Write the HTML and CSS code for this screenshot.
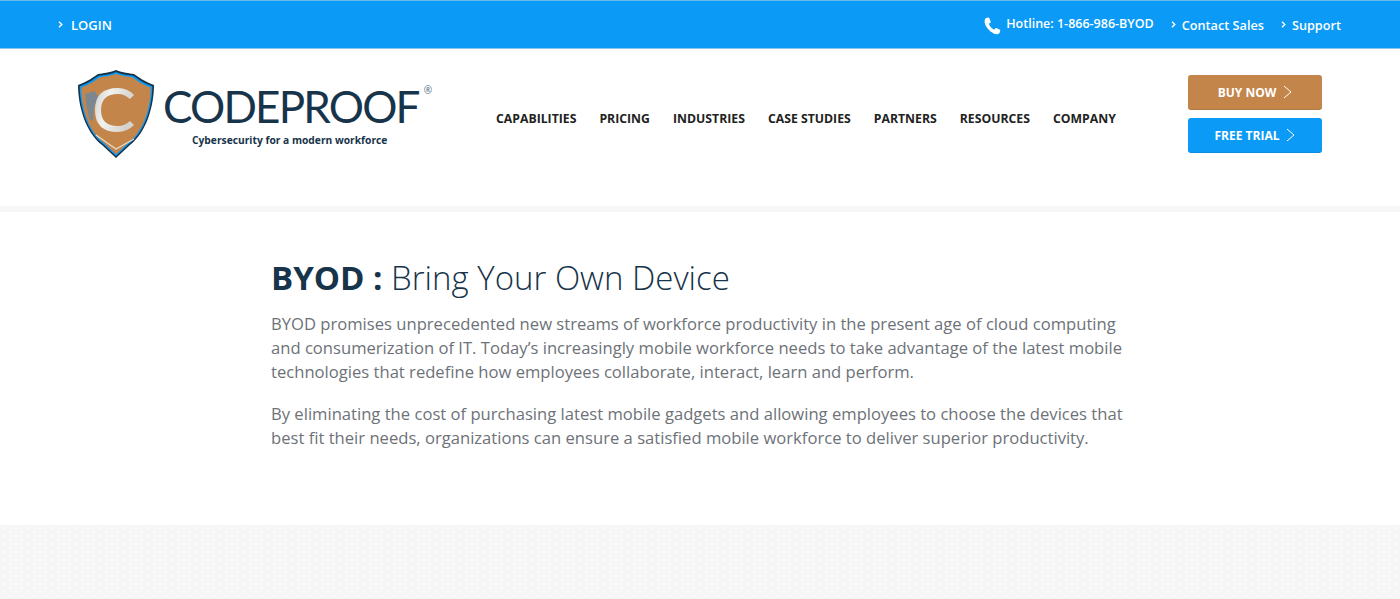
FILE: index.html
```html
<!DOCTYPE html>
<html lang="en">
<head>
<meta charset="utf-8">
<title>BYOD : Bring Your Own Device</title>
<link rel="stylesheet" href="styles.css">
</head>
<body>
<div class="topbar">
  <a class="top-link login"><svg class="chev" viewBox="0 0 5 7" width="5" height="7"><path d="M1 .8 L3.800 3.500 L1 6.200" fill="none" stroke="#fff" stroke-width="1.400"/></svg>LOGIN</a>
  <div class="top-right">
    <span class="hotline">
      <svg class="phone" viewBox="0 0 20 20" width="18" height="18"><path d="M3.200 1.200 L6 .6 Q6.800 .6 7.100 1.300 L8.600 5.200 Q8.800 5.900 8.200 6.400 L6.500 7.600 Q7.200 9.800 8.700 11.500 Q10.200 13.100 12.300 14.100 L13.800 12.500 Q14.300 12 15 12.300 L18.700 14.200 Q19.400 14.600 19.200 15.300 L18.300 17.800 Q17.800 19 16.300 19.200 Q12.200 19.300 8 15.800 Q3 11.500 1.800 6.200 Q1.300 2.800 3.200 1.200 Z" fill="#fff"/></svg>
      Hotline: 1-866-986-BYOD
    </span>
    <a class="top-link"><svg class="chev" viewBox="0 0 5 7" width="5" height="7"><path d="M1 .8 L3.800 3.500 L1 6.200" fill="none" stroke="#fff" stroke-width="1.400"/></svg>Contact Sales</a>
    <a class="top-link"><svg class="chev" viewBox="0 0 5 7" width="5" height="7"><path d="M1 .8 L3.800 3.500 L1 6.200" fill="none" stroke="#fff" stroke-width="1.400"/></svg>Support</a>
  </div>
</div>
<header class="header">
  <a class="logo">
    <svg class="shield" viewBox="0 0 78 90" width="78" height="90">
      <defs>
        <linearGradient id="cfill" x1="0" y1="0" x2="1" y2="0.300">
          <stop offset="0" stop-color="#d8d8d6"/>
          <stop offset="0.350" stop-color="#f1f1ee"/>
          <stop offset="1" stop-color="#d6d2cc"/>
        </linearGradient>
      </defs>
      <path d="M39 0 C46 3 52 3 57 4 C62 7 66 11 77 15 C77 35 70 62 53 75 L39 88 L25 75 C8 62 1 35 1 15 C12 11 16 7 21 4 C26 3 32 3 39 0 Z" fill="#17344a"/>
      <path transform="translate(39 44) scale(.955) translate(-39 -44)" d="M39 0 C46 3 52 3 57 4 C62 7 66 11 77 15 C77 35 70 62 53 75 L39 88 L25 75 C8 62 1 35 1 15 C12 11 16 7 21 4 C26 3 32 3 39 0 Z" fill="#0b9af5"/>
      <path transform="translate(39 44) scale(.915) translate(-39 -44)" d="M39 0 C46 3 52 3 57 4 C62 7 66 11 77 15 C77 35 70 62 53 75 L39 88 L25 75 C8 62 1 35 1 15 C12 11 16 7 21 4 C26 3 32 3 39 0 Z" fill="#c4854a"/>
      <path d="M8 24 L17 21 L22 27 L17 37 L16 51 L13 50 Q9 36 8 24 Z" fill="#7d8790"/>
      <path d="M55 27 Q49 21 41 21 Q21 21 21 40 Q21 59 41 59 Q49 59 55 53" fill="none" stroke="url(#cfill)" stroke-width="6"/>
      <path d="M19 65 L39 79 L57 69" fill="none" stroke="#ecd9c4" stroke-width="1.300"/>
    </svg>
    <span class="wordmark">
      <span class="brand"><span class="brand-name">CODEPROOF</span><sup class="reg">&#174;</sup></span>
      <span class="tag">Cybersecurity for a modern workforce</span>
    </span>
  </a>
  <nav class="nav">
    <a>CAPABILITIES</a><a>PRICING</a><a>INDUSTRIES</a><a>CASE STUDIES</a><a>PARTNERS</a><a>RESOURCES</a><a>COMPANY</a>
  </nav>
  <div class="cta">
    <a class="btn buy">BUY NOW<svg class="arr" viewBox="0 0 9 14" width="9" height="14"><path d="M1 1 L8 7 L1 13" fill="none" stroke="#fff" stroke-width="1"/></svg></a>
    <a class="btn trial">FREE TRIAL<svg class="arr" viewBox="0 0 9 14" width="9" height="14"><path d="M1 1 L8 7 L1 13" fill="none" stroke="#fff" stroke-width="1"/></svg></a>
  </div>
</header>
<div class="strip"></div>
<main class="main">
  <h1 class="title"><strong>BYOD :</strong> Bring Your Own Device</h1>
  <p>BYOD promises unprecedented new streams of workforce productivity in the present age of cloud computing and consumerization of IT. Today&#8217;s increasingly mobile workforce needs to take advantage of the latest mobile technologies that redefine how employees collaborate, interact, learn and perform.</p>
  <p>By eliminating the cost of purchasing latest mobile gadgets and allowing employees to choose the devices that best fit their needs, organizations can ensure a satisfied mobile workforce to deliver superior productivity.</p>
</main>
<div class="band"></div>
</body>
</html>
```
FILE: styles.css
```css
* { box-sizing: border-box; }
html, body { margin: 0; padding: 0; }
body { font-family: "Open Sans", sans-serif; background: #fff; height: 599px; overflow: hidden; display: flex; flex-direction: column; }
.topbar { height: 49px; background: #0b9af5; border-top: 1px solid #6ab9ec; border-bottom: 1px solid #8cc5ee; display: flex; align-items: flex-start; justify-content: space-between; padding: 0 59px 0 58px; color: #fff; flex: none; }
.top-link { font-size: 12.700px; font-weight: 600; color: #fff; line-height: 20px; display: inline-flex; align-items: center; }
.login { margin-top: 14px; font-size: 13px; }
.chev { flex: none; margin-right: 6px; margin-top: -1px; }
.login .chev { margin-right: 8px; }
.top-right { display: flex; align-items: flex-start; gap: 17px; margin-top: 14px; }
.hotline { font-size: 12.500px; font-weight: 600; line-height: 20px; display: inline-flex; align-items: center; gap: 5px; margin-top: -2px; }
.phone { flex: none; margin-top: 4px; }
.header { height: 157px; display: flex; align-items: flex-start; flex: none; padding: 0 78px 0 77px; }
.logo { display: flex; align-items: flex-start; margin-top: 21px; width: 419px; flex: none; }
.shield { flex: none; }
.wordmark { display: flex; flex-direction: column; margin-left: 8px; margin-top: 11px; }
.brand { display: flex; align-items: flex-start; font-family: "Lato", sans-serif; font-size: 44px; line-height: 50px; color: #17344a; white-space: nowrap; }
.brand-name { letter-spacing: -1.800px; }
.reg { font-family: "Open Sans", sans-serif; font-size: 10px; line-height: 12px; margin-left: 5px; margin-top: 3px; color: #4d6a80; vertical-align: baseline; }
.tag { font-size: 10.250px; font-weight: 700; color: #17344a; margin-left: 29px; line-height: 14px; white-space: nowrap; margin-top: 2px; }
.nav { display: flex; gap: 23px; margin-top: 60px; font-size: 12.250px; font-weight: 700; color: #222; line-height: 20px; white-space: nowrap; }
.cta { margin-left: auto; display: flex; flex-direction: column; gap: 9px; margin-top: 26px; }
.btn { width: 134px; height: 34px; border-radius: 3px; color: #fff; font-size: 12px; font-weight: 700; display: flex; align-items: center; justify-content: center; gap: 7px; }
.buy { background: #c4854a; box-shadow: 0 1px 0 #b37a44; }
.trial { background: #0b9af5; box-shadow: 0 1px 0 #0a8ce0; }
.strip { height: 6px; flex: none; background: #f6f6f6; }
.main { width: 858px; margin: 0 auto; flex: none; height: 313px; padding-top: 44px; }
.title { margin: 0 0 12px; font-size: 33px; font-weight: 300; line-height: 44px; color: #17344a; }
.title strong { font-weight: 700; }
.main p { margin: 0 0 18px; font-size: 16.620px; line-height: 24px; color: #6d7278; }
.band { flex: 1; background-color: #f6f6f6; background-image: radial-gradient(circle at 1px 1px, #fcfcfc 0.7px, transparent 1px), radial-gradient(circle at 1px 1px, #fcfcfc 0.7px, transparent 1px); background-size: 12px 8px; background-position: 3px 2px, 9px 6px; }
```
